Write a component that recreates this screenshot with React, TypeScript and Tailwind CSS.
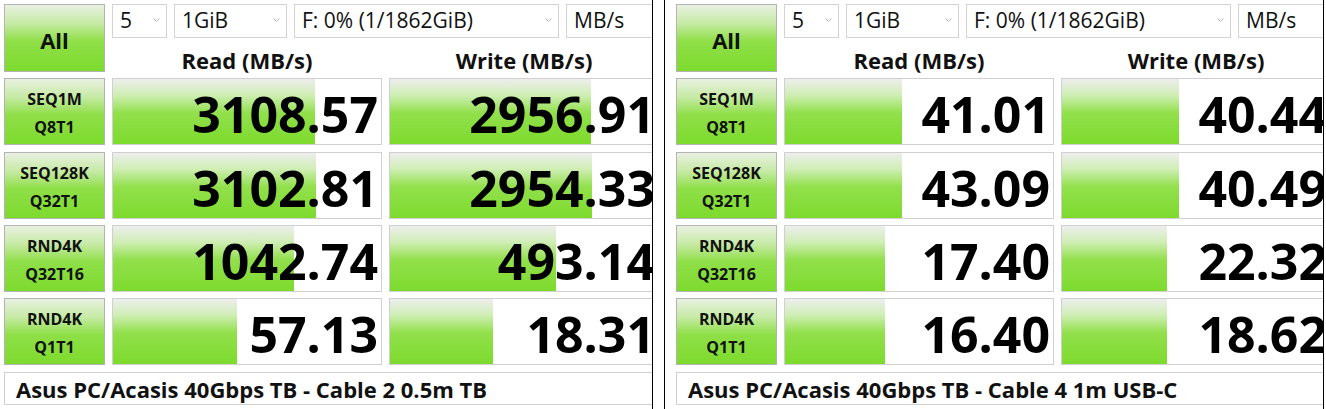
import React from "react";

type Row = { a: string; b: string; r: string; rw: number; w: string; ww: number };
type PanelData = { title: string; rows: Row[] };

const left: PanelData = {
  title: "Asus PC/Acasis 40Gbps TB - Cable 2 0.5m TB",
  rows: [
    { a: "SEQ1M", b: "Q8T1", r: "3108.57", rw: 202, w: "2956.91", ww: 201 },
    { a: "SEQ128K", b: "Q32T1", r: "3102.81", rw: 203, w: "2954.33", ww: 202 },
    { a: "RND4K", b: "Q32T16", r: "1042.74", rw: 181, w: "493.14", ww: 166 },
    { a: "RND4K", b: "Q1T1", r: "57.13", rw: 124, w: "18.31", ww: 103 },
  ],
};

const right: PanelData = {
  title: "Asus PC/Acasis 40Gbps TB - Cable 4 1m USB-C",
  rows: [
    { a: "SEQ1M", b: "Q8T1", r: "41.01", rw: 117, w: "40.44", ww: 117 },
    { a: "SEQ128K", b: "Q32T1", r: "43.09", rw: 117, w: "40.49", ww: 117 },
    { a: "RND4K", b: "Q32T16", r: "17.40", rw: 100, w: "22.32", ww: 105 },
    { a: "RND4K", b: "Q1T1", r: "16.40", rw: 100, w: "18.62", ww: 105 },
  ],
};

const greenBtn =
  "border border-[#b4b4b4] bg-[linear-gradient(to_bottom,#e9f1e2_0%,#c6eaa4_28%,#8fdf48_55%,#7ddb2d_100%)]";

function Chevron() {
  return (
    <svg width="7" height="4" viewBox="0 0 7 4" className="shrink-0 mb-[2px]">
      <path d="M0.5 0.5 L3.5 3.5 L6.5 0.5" fill="none" stroke="#b4b4b4" strokeWidth="1" />
    </svg>
  );
}

function Combo({ text, w }: { text: string; w: string }) {
  return (
    <div
      className={`${w} h-[34px] shrink-0 border border-[#d4d4d4] bg-white flex items-center justify-between pl-[7px] pr-[6px] text-[21px] text-[#111]`}
    >
      <span className="leading-[1.2] whitespace-nowrap">{text}</span>
      <Chevron />
    </div>
  );
}

function Cell({ value, bar }: { value: string; bar: number }) {
  return (
    <div className="relative h-full border border-[#d0d0d0] bg-white">
      <div
        className="absolute left-0 top-0 bottom-0 bg-[linear-gradient(to_bottom,#eeeeee_0%,#cfeeb4_25%,#92e04c_52%,#7ddb2d_100%)]"
        style={{ width: bar }}
      />
      <div className="relative h-full flex items-center justify-end pr-[3px] pt-[6px] text-[50px] font-bold leading-[1.1] text-black whitespace-nowrap">
        {value}
      </div>
    </div>
  );
}

function Panel({ data, width }: { data: PanelData; width: string }) {
  return (
    <div className={`${width} h-full shrink-0 overflow-hidden`}>
      <div className="w-[700px] pl-[4px] pt-[4px] flex flex-col">
        <div className="flex h-[68px] gap-x-[7px]">
          <div className={`w-[101px] h-full ${greenBtn} flex items-center justify-center pt-[5px] text-[22px] font-bold text-[#111]`}>
            All
          </div>
          <div className="flex flex-col">
            <div className="flex gap-x-[7px]">
              <Combo text="5" w="w-[55px]" />
              <Combo text="1GiB" w="w-[113px]" />
              <Combo text="F: 0% (1/1862GiB)" w="w-[265px]" />
              <Combo text="MB/s" w="w-[100px]" />
            </div>
            <div className="flex gap-x-[7px] flex-1 items-center pt-[9px]">
              <div className="w-[270px] text-center text-[22px] font-bold text-[#111] leading-[1.2]">Read (MB/s)</div>
              <div className="w-[270px] text-center text-[22px] font-bold text-[#111] leading-[1.2]">Write (MB/s)</div>
            </div>
          </div>
        </div>
        {data.rows.map((row, i) => (
          <div
            key={i}
            className={`flex gap-x-[7px] h-[67px] ${i === 1 ? "mt-[7px]" : "mt-[6px]"}`}
          >
            <div
              className={`w-[101px] h-full ${greenBtn} flex flex-col items-center justify-center gap-y-[10px] pt-[5px] text-[16px] font-bold text-[#111] leading-[1.1]`}
            >
              <span>{row.a}</span>
              <span>{row.b}</span>
            </div>
            <div className="w-[270px] h-full">
              <Cell value={row.r} bar={row.rw} />
            </div>
            <div className="w-[270px] h-full">
              <Cell value={row.w} bar={row.ww} />
            </div>
          </div>
        ))}
        <div className="mt-[7px] h-[33px] w-[660px] border border-[#d0d0d0] bg-white flex items-center pl-[11px] pt-[1px] text-[22px] font-bold text-[#111] leading-[1.2] whitespace-nowrap">
          {data.title}
        </div>
      </div>
    </div>
  );
}

export default function App() {
  return (
    <div className="w-[1326px] h-[409px] bg-white flex font-['Open_Sans',sans-serif] overflow-hidden">
      <Panel data={left} width="w-[652px]" />
      <div className="w-px h-full bg-black shrink-0" />
      <div className="w-[11px] h-full shrink-0" />
      <div className="w-px h-full bg-black shrink-0" />
      <div className="w-[7px] h-full shrink-0" />
      <Panel data={right} width="w-[651px]" />
      <div className="w-px h-full bg-black shrink-0" />
    </div>
  );
}
